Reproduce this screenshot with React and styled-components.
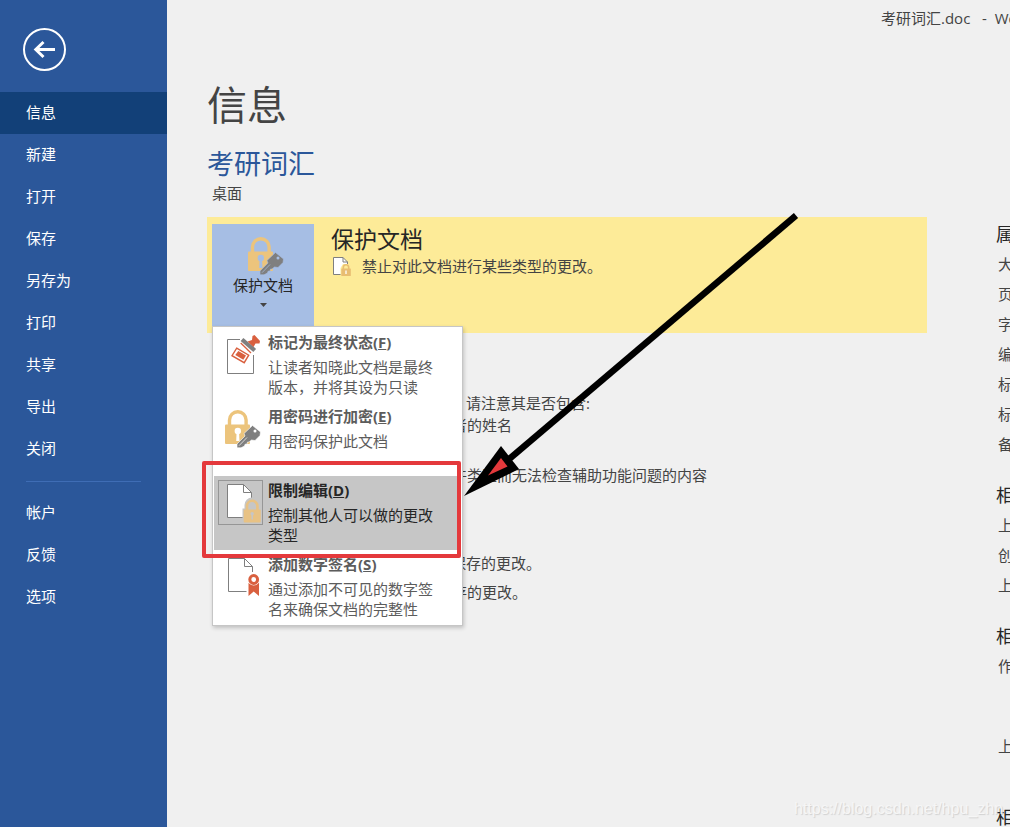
import styled, { createGlobalStyle } from 'styled-components';

const mainLinks = ['信息', '新建', '打开', '保存', '另存为', '打印', '共享', '导出', '关闭'];
const moreLinks = ['帐户', '反馈', '选项'];

const menuItems = [
  { title: '标记为最终状态', hotkey: 'F', text: '让读者知晓此文档是最终版本，并将其设为只读', Icon: StampIcon },
  { title: '用密码进行加密', hotkey: 'E', text: '用密码保护此文档', Icon: LockKeyIcon },
  { title: '限制编辑', hotkey: 'D', text: '控制其他人可以做的更改类型', Icon: PageLockIcon, active: true },
  { title: '添加数字签名', hotkey: 'S', text: '通过添加不可见的数字签名来确保文档的完整性', Icon: RibbonIcon },
];

const properties = [
  {
    title: '属性',
    rows: [
      { label: '大小' },
      { label: '页数' },
      { label: '字数' },
      { label: '编辑时间总计' },
      { label: '标题' },
      { label: '标记' },
      { label: '备注' },
    ],
  },
  { title: '相关日期', rows: [{ label: '上次修改时间' }, { label: '创建时间' }, { label: '上次打印时间' }] },
  { title: '相关人员', rows: [{ label: '作者', height: 80 }, { label: '上次修改者', height: 50 }] },
  { title: '相关文档', rows: [] },
];

export default function App() {
  return (
    <Page>
      <GlobalStyle />
      <Sidebar>
        <BackButton aria-label='返回'>
          <svg width='43' height='43' viewBox='0 0 43 43' fill='none' stroke='#fff'>
            <circle cx='21.5' cy='21.5' r='20.5' strokeWidth='2' />
            <path d='M13 21.5H32' strokeWidth='3' />
            <path d='M20.500 14L12.800 21.500L20.500 29' strokeWidth='3' />
          </svg>
        </BackButton>
        {mainLinks.map((name) => (
          <NavLink key={name} href='#' $active={name === '信息'}>
            {name}
          </NavLink>
        ))}
        <Divider />
        {moreLinks.map((name) => (
          <NavLink key={name} href='#'>
            {name}
          </NavLink>
        ))}
      </Sidebar>

      <Main>
        <WindowTitle>{'考研词汇.doc   -  Word'}</WindowTitle>
        <Title>信息</Title>
        <FileName>考研词汇</FileName>
        <Location>桌面</Location>
        <Columns>
          <Sections>
            <Section $highlight>
              <ProtectWrapper>
                <ProtectButton aria-expanded='true'>
                  <LockKeyIcon hole='#a6bee4' height={42} />
                  保护文档
                  <Caret width='7' height='4' viewBox='0 0 7 4'>
                    <path d='M0 0H7L3.5 4Z' fill='#444' />
                  </Caret>
                </ProtectButton>
                <Menu>
                  {menuItems.map(({ title, hotkey, text, Icon, active }) => (
                    <MenuItem key={hotkey} $active={active}>
                      <IconBox $active={active}>
                        <Icon />
                      </IconBox>
                      <span>
                        <MenuTitle>
                          {title}(<u>{hotkey}</u>)
                        </MenuTitle>
                        <MenuText>{text}</MenuText>
                      </span>
                    </MenuItem>
                  ))}
                  <Marker />
                </Menu>
              </ProtectWrapper>
              <div>
                <SectionTitle>保护文档</SectionTitle>
                <StatusLine>
                  <SmallPageLock />
                  禁止对此文档进行某些类型的更改。
                </StatusLine>
              </div>
            </Section>

            <Section>
              <SectionBody>
                <Text>在共享此文件之前，请注意其是否包含:</Text>
                <List>
                  <li>文档属性和作者的姓名</li>
                  <li>由于当前的文件类型而无法检查辅助功能问题的内容</li>
                </List>
              </SectionBody>
            </Section>

            <Section>
              <SectionBody>
                <Text>签出文档和恢复未保存的更改。</Text>
                <Note>今天没有未保存的更改。</Note>
              </SectionBody>
            </Section>
          </Sections>

          <Properties>
            {properties.map(({ title, rows }) => (
              <section key={title}>
                <PropertyTitle>{title}</PropertyTitle>
                {rows.map(({ label, height }) => (
                  <Property key={label} $height={height}>
                    {label}
                  </Property>
                ))}
              </section>
            ))}
          </Properties>
        </Columns>
      </Main>

      <Arrow width='340' height='290' viewBox='460 210 340 290'>
        <path d='M796 215.500L508 460' stroke='#000' strokeWidth='6.500' />
        <path d='M464 496L501 446L519 469Z' fill='#000' />
        <path d='M488 475.500L501 458L507.500 466.500Z' fill='#e4393c' />
      </Arrow>
      <Watermark>https://blog.csdn.net/hpu_zhn</Watermark>
    </Page>
  );
}

function StampIcon() {
  return (
    <svg width='45' height='45' viewBox='0 0 45 45'>
      <path d='M22 7.500H9.500V41.500H35.500V23' fill='#fff' stroke='#7f7f7f' />
      <path d='M18.700 16.200L30.700 23.200L26.200 30.700L14 23.700Z' fill='#fff' stroke='#d9603f' strokeWidth='1.400' />
      <path d='M20.300 18.900L28 23.600L25.300 27.700L17.300 23Z' fill='#d9603f' />
      <path d='M22.700 11L33 21' stroke='#d9603f' strokeWidth='1.300' />
      <path d='M24 7.500L36.700 18.500' stroke='#7f7f7f' strokeWidth='4.200' />
      <path d='M34.500 4L36.500 3L42 9L41.500 11.500L37.500 11.500L35.500 15L29.500 9.500L34 8Z' fill='#d9603f' />
    </svg>
  );
}

function LockKeyIcon({ hole = '#fff', height = 45 }) {
  return (
    <svg width='45' height={height} viewBox={`0 0 45 ${height}`}>
      <path d='M11.500 20V14a8.300 8.300 0 0 1 16.600 0V20' fill='none' stroke='#ecc47c' strokeWidth='3.400' />
      <rect x='7' y='18.500' width='25' height='19.500' rx='1' fill='#ecc47c' />
      <circle cx='19.800' cy='25' r='3.200' fill={hole} />
      <path d='M18.600 26H21L21.500 35H18.200Z' fill={hole} />
      <path
        d='M34.500 19.500L42.500 26L42 29.500L37 34.500L33.500 34L31 36L29.500 36L29 38L27 38.300L26.500 40L23 41.800H19V38L27 30L26 27.500Z'
        fill='#7f7f7f'
        stroke={hole}
        strokeWidth='0.600'
      />
      <circle cx='37' cy='25' r='1.500' fill={hole} />
      <path d='M21 39.700L29 31.500' stroke={hole} strokeWidth='0.700' />
    </svg>
  );
}

function PageLockIcon() {
  return (
    <svg width='45' height='45' viewBox='0 0 45 45'>
      <path d='M9.500 4.500H25.500L33.500 12.500V37.500H9.500Z' fill='#fff' stroke='#7f7f7f' />
      <path d='M25.500 4.500V12.500H33.500' fill='none' stroke='#7f7f7f' />
      <path d='M24.500 42.500V28.500H26.500V25a7.500 7.500 0 0 1 15 0V28.500H43.500V42.500Z' fill='#c6c6c6' />
      <path d='M29 30V26a5.200 5.200 0 0 1 10.400 0V30' fill='none' stroke='#e8c284' strokeWidth='2.600' />
      <rect x='25.700' y='29.500' width='17' height='13' rx='1' fill='#e8c284' />
      <circle cx='34.200' cy='33.800' r='1.700' fill='#c6c6c6' />
      <path d='M34.200 34V39.500' stroke='#c6c6c6' strokeWidth='1.500' />
    </svg>
  );
}

function RibbonIcon() {
  return (
    <svg width='45' height='45' viewBox='0 0 45 45'>
      <path d='M28.500 37.500H10.500V4.500H26.500L34.500 12.500V18' fill='#fff' stroke='#7f7f7f' />
      <path d='M26.500 4.500V12.500H34.500' fill='none' stroke='#7f7f7f' />
      <path d='M30.500 29H41V42L35.700 37.500L30.500 42Z' fill='#d9603f' />
      <circle cx='35.700' cy='25.500' r='6' fill='#fff' />
      <circle cx='35.700' cy='25.500' r='3.900' fill='#fff' stroke='#d9603f' strokeWidth='3' />
    </svg>
  );
}

function SmallPageLock() {
  return (
    <svg width='20' height='20' viewBox='0 0 20 20'>
      <path d='M0.500 1.500H10L14.500 6V18.500H0.500Z' fill='#fff' stroke='#7f7f7f' />
      <path d='M10 1.500V6H14.500' fill='none' stroke='#7f7f7f' />
      <path d='M7.500 20V12L10 8H16L18.500 12V20Z' fill='#fdeb98' />
      <path d='M10.300 13V11.500a2.700 2.700 0 0 1 5.400 0V13' fill='none' stroke='#e8bd72' strokeWidth='1.600' />
      <rect x='8.300' y='12.500' width='9.500' height='7.500' rx='0.500' fill='#e8bd72' />
      <path d='M13 14.500V18' stroke='#fff' strokeWidth='1.300' />
    </svg>
  );
}

const GlobalStyle = createGlobalStyle`
  * {
    box-sizing: border-box;
  }
  body {
    margin: 0;
    background: #f0f0f0;
    color: #444;
    font: 15px/22px 'Open Sans', 'Noto Sans CJK SC', sans-serif;
  }
  h1, h2, h3, p, ul {
    margin: 0;
    padding: 0;
    font-weight: 400;
  }
  button {
    border: 0;
    padding: 0;
    background: none;
    color: inherit;
    font: inherit;
    cursor: pointer;
  }
`;
const Page = styled.div`
  position: relative;
  display: flex;
  height: 100vh;
  overflow: hidden;
`;
const Sidebar = styled.nav`
  flex: none;
  width: 167px;
  display: flex;
  flex-direction: column;
  background: #2b579a;
`;
const BackButton = styled.button`
  align-self: flex-start;
  height: 43px;
  margin: 28px 0 21px 23px;

  svg {
    display: block;
  }
`;
const NavLink = styled.a`
  padding: 0 0 2px 26px;
  line-height: 40px;
  color: #fff;
  text-decoration: none;
  background: ${({ $active }) => ($active ? '#124078' : 'none')};
`;
const Divider = styled.hr`
  width: 115px;
  height: 1px;
  margin: 11px 26px 10px;
  border: 0;
  background: #3f6db5;
`;
const Main = styled.main`
  flex: 1;
  min-width: 0;
  padding-left: 40px;
`;
const WindowTitle = styled.div`
  padding-left: 674px;
  line-height: 36px;
  white-space: pre;
`;
const Title = styled.h1`
  margin-top: 39px;
  font-size: 40px;
  line-height: 60px;
`;
const FileName = styled.h2`
  margin-top: 11px;
  font-size: 27px;
  line-height: 36px;
  color: #2b579a;
`;
const Location = styled.p`
  padding-left: 5px;
  margin-bottom: 13px;
`;
const Columns = styled.div`
  display: flex;
  gap: 69px;
`;
const Sections = styled.div`
  flex: 0 0 720px;
  display: flex;
  flex-direction: column;
  gap: 20px;
`;
const Section = styled.section`
  display: flex;
  gap: 17px;
  padding: 7px 5px;
  background: ${({ $highlight }) => ($highlight ? '#fdeb98' : 'none')};
`;
const SectionBody = styled.div`
  padding: 32px 0 0 119px;
`;
const SectionTitle = styled.h3`
  font-size: 23px;
  line-height: 30px;
  color: #262626;
`;
const Text = styled.p`
  white-space: nowrap;
`;
const StatusLine = styled.p`
  display: flex;
  align-items: center;
  gap: 9px;
  margin-top: 1px;
  padding-left: 2px;
`;
const List = styled.ul`
  display: flex;
  flex-direction: column;
  gap: 28px;
  padding-left: 31px;
`;
const Note = styled.p`
  margin-top: 7px;
  padding-left: 31px;
`;
const ProtectWrapper = styled.div`
  position: relative;
`;
const ProtectButton = styled.button`
  width: 102px;
  height: 102px;
  padding-top: 9px;
  display: flex;
  flex-direction: column;
  align-items: center;
  line-height: 20px;
  color: #262626;
  background: #a6bee4;
`;
const Caret = styled.svg`
  margin-top: 8px;
`;
const Menu = styled.div`
  position: absolute;
  top: 100%;
  left: 0;
  z-index: 1;
  width: 251px;
  padding: 1px;
  border: 1px solid #c6c6c6;
  background: #fff;
  box-shadow: 1px 2px 4px rgba(0, 0, 0, 0.2);
`;
const MenuItem = styled.button`
  width: 100%;
  min-height: 74px;
  padding: 2px 20px 5px 4px;
  display: flex;
  align-items: flex-start;
  gap: 5px;
  text-align: left;
  color: ${({ $active }) => ($active ? '#262626' : '#5c5c5c')};
  background: ${({ $active }) => ($active ? '#c6c6c6' : '#fff')};
`;
const IconBox = styled.span`
  flex: none;
  margin-top: 2px;
  outline: ${({ $active }) => ($active ? '1px solid #969696' : 'none')};
  outline-offset: -1px;

  svg {
    display: block;
  }
`;
const MenuTitle = styled.strong`
  display: block;
  margin-bottom: 3px;
  line-height: 24px;
`;
const MenuText = styled.span`
  display: block;
  line-height: 20px;
`;
const Marker = styled.div`
  position: absolute;
  top: 134px;
  left: -11px;
  width: 259px;
  height: 97px;
  border: 4px solid #e4393c;
  border-radius: 2px;
  pointer-events: none;
`;
const Properties = styled.aside`
  flex: none;
  padding-top: 2px;
  display: flex;
  flex-direction: column;
  gap: 21px;
  line-height: 30px;
  white-space: nowrap;
`;
const PropertyTitle = styled.h3`
  font-size: 18px;
  line-height: 30px;
  color: #262626;
`;
const Property = styled.p`
  min-height: ${({ $height = 30 }) => $height}px;
  padding-left: 2px;
`;
const Arrow = styled.svg`
  position: absolute;
  top: 210px;
  left: 460px;
  z-index: 2;
  pointer-events: none;
`;
const Watermark = styled.span`
  position: absolute;
  right: 7px;
  bottom: 7px;
  font-family: 'Liberation Sans', sans-serif;
  font-size: 16px;
  color: #f6f6f6;
  text-shadow: 1px 1px 1px #d0d0d0;
`;
